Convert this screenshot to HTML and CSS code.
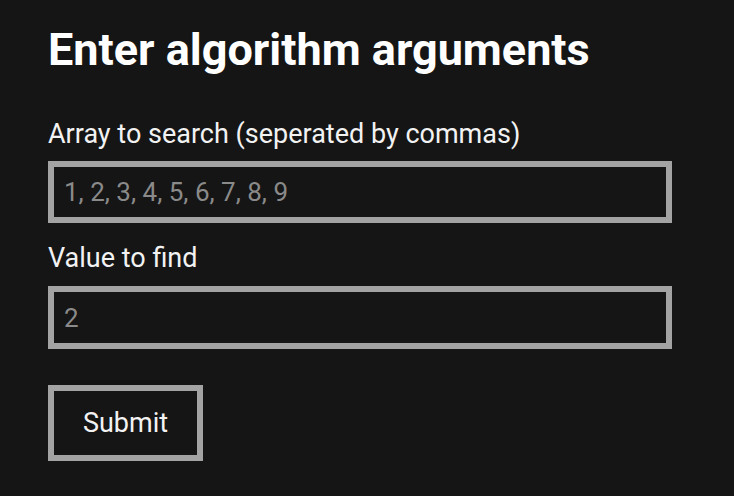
FILE: index.html
```html
<!DOCTYPE html>
<html lang="en">
<head>
<meta charset="utf-8">
<title>Enter algorithm arguments</title>
<link rel="stylesheet" href="styles.css">
</head>
<body>
<form class="form">
  <h1 class="title">Enter algorithm arguments</h1>
  <label class="label" for="arr">Array to search (seperated by commas)</label>
  <input class="field" id="arr" type="text" placeholder="1, 2, 3, 4, 5, 6, 7, 8, 9">
  <label class="label label-second" for="val">Value to find</label>
  <input class="field field-second" id="val" type="text" placeholder="2">
  <button class="submit" type="button">Submit</button>
</form>
</body>
</html>
```
FILE: styles.css
```css
html, body {
  margin: 0;
  padding: 0;
  background: #151515;
}
body {
  font-family: Roboto, "Liberation Sans", sans-serif;
  color: #ffffff;
}
.form {
  display: flex;
  flex-direction: column;
  align-items: flex-start;
  padding: 0 62px 0 48px;
}
.title {
  margin: 24px 0 0 0;
  font-size: 45px;
  line-height: 52px;
  font-weight: 700;
}
.label {
  margin-top: 42px;
  font-size: 27px;
  line-height: 32px;
  color: #f2f2f2;
}
.label-second {
  margin-top: 19px;
}
.field {
  box-sizing: border-box;
  margin-top: 11px;
  width: 624px;
  height: 62px;
  border: 6px solid #a3a3a3;
  background: #151515;
  padding: 0 10px;
  font-family: Roboto, "Liberation Sans", sans-serif;
  font-size: 26px;
  color: #ffffff;
  outline: none;
}
.field-second {
  margin-top: 12px;
  height: 63px;
}
.field::placeholder {
  color: #8a8a8a;
}
.submit {
  box-sizing: border-box;
  margin-top: 36px;
  width: 155px;
  height: 76px;
  border: 6px solid #a3a3a3;
  background: #151515;
  color: #f2f2f2;
  font-family: Roboto, "Liberation Sans", sans-serif;
  font-size: 27px;
  padding: 0;
}
```
